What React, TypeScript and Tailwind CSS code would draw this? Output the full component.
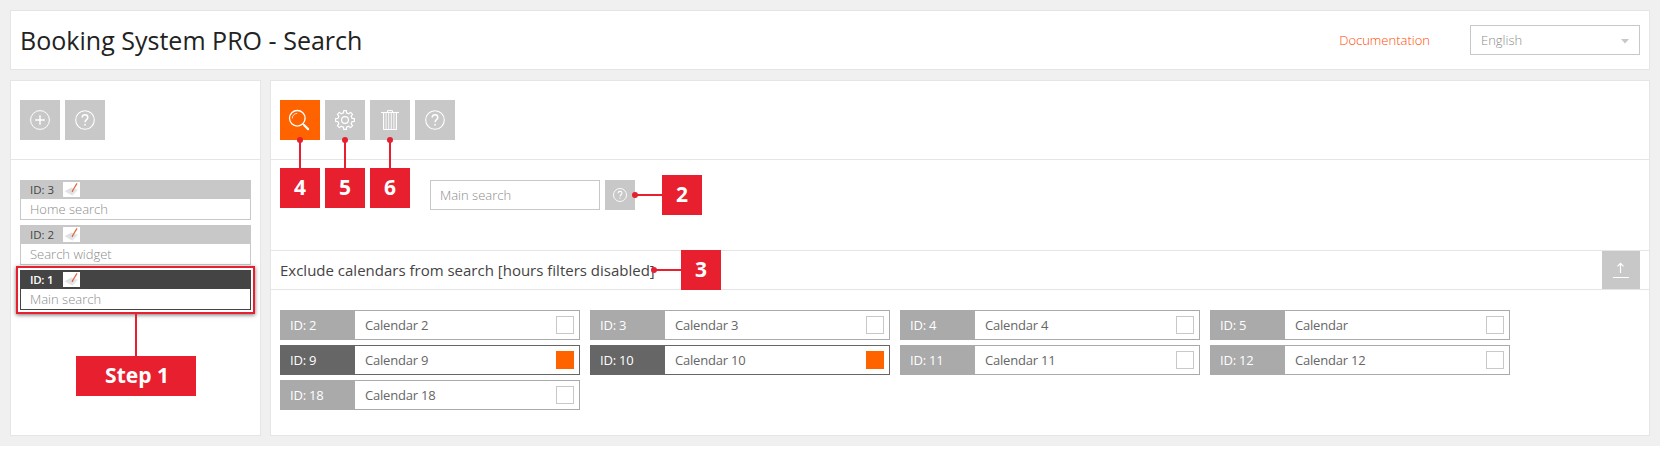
import type { ReactNode } from "react";

const PlusCircle = () => (
  <svg width="20" height="20" viewBox="0 0 20 20" fill="none" stroke="#fff" strokeWidth="1">
    <circle cx="10" cy="10" r="9.4" />
    <path d="M10 5.2v9.6M5.2 10h9.6" strokeWidth="1.4" />
  </svg>
);

const HelpCircle = ({ size }: { size: number }) => (
  <svg width={size} height={size} viewBox="0 0 20 20" fill="none" stroke="#fff" strokeWidth={size < 20 ? 1.3 : 1.1}>
    <circle cx="10" cy="10" r="9.3" />
    <path d="M7.2 7.6c0-1.7 1.1-2.8 2.8-2.8s2.8 1 2.8 2.6c0 2.2-2.7 2.3-2.7 4.8" strokeWidth="1.5" />
    <path d="M10 13.9v1.6" strokeWidth="1.6" />
  </svg>
);

const Magnifier = () => (
  <svg width="22" height="22" viewBox="0 0 22 22" fill="none" stroke="#fff" className="-ml-[2px] -mt-px">
    <circle cx="9.3" cy="9.3" r="7.8" strokeWidth="1.3" />
    <path d="M4.3 9.4c0-2.9 2.1-5 4.9-5.1" strokeWidth="0.8" />
    <path d="M14.9 14.9l1.7 1.7" strokeWidth="1.2" />
    <path d="M16.2 16.2l3.9 3.9" strokeWidth="2.2" strokeLinecap="round" />
  </svg>
);

const Gear = () => (
  <svg width="20" height="20" viewBox="0 0 20 20" fill="none" stroke="#fff" strokeWidth="1.2" strokeLinejoin="round">
    <path d="M8.4 2.9L8.7 0.6h2.6l0.3 2.3 2.2 0.9 1.8-1.4 2 2-1.4 1.8 0.9 2.2 2.3 0.3v2.6l-2.3 0.3-0.9 2.2 1.4 1.8-2 2-1.8-1.4-2.2 0.9-0.3 2.3H8.7l-0.3-2.3-2.2-0.9-1.8 1.4-2-2 1.4-1.8-0.9-2.2-2.3-0.3V8.7l2.3-0.3 0.9-2.2-1.4-1.8 2-2 1.8 1.4z" />
    <circle cx="10" cy="10" r="3.4" />
  </svg>
);

const Trash = () => (
  <svg width="18" height="20" viewBox="0 0 18 20" fill="none" stroke="#fff">
    <path d="M0 2.5h18" strokeWidth="1.1" />
    <path d="M6.5 2.3V0.6h5v1.7" strokeWidth="1" />
    <path d="M2.6 2.5v17M15.4 2.5v17M2.2 19.5h13.6" strokeWidth="1.1" />
    <path d="M5.1 3v16M7.7 3v16M10.3 3v16M12.9 3v16" strokeWidth="0.9" />
  </svg>
);

const UploadArrow = () => (
  <svg width="16" height="16" viewBox="0 0 16 16" fill="none" stroke="#fff" strokeWidth="1">
    <path d="M7.5 11V1.5M4.5 4.3l3-3 3 3" strokeWidth="1.2" />
    <path d="M0 15.5h16" />
  </svg>
);

const PencilThumb = () => (
  <svg width="17" height="15" viewBox="0 0 17 15" className="mt-px self-start bg-white">
    <path d="M1.5 9.2l7-3.7 6.5 2.3-5.6 6z" fill="#e6e6e6" />
    <path d="M3.5 9.2l5-2.5M5.5 10.4l5-3M7.5 11.6l4.6-3.4" stroke="#d2d2d2" strokeWidth="0.6" />
    <path d="M13.7 1.8L9.4 9" stroke="#ea6b45" strokeWidth="1.3" strokeLinecap="round" />
    <path d="M9.7 8.5l-0.5 1.3" stroke="#8d6b5c" strokeWidth="0.9" />
  </svg>
);

const IconButton = ({ children, active }: { children: ReactNode; active?: boolean }) => (
  <button className={`flex size-10 items-center justify-center ${active ? "bg-[#ff6300]" : "bg-[#c8c8c8]"}`}>
    {children}
  </button>
);

const Badge = ({ label }: { label: string }) => (
  <span className="flex size-10 shrink-0 items-center justify-center bg-[#e81f2f] pb-px text-[21px] font-bold text-white">
    {label}
  </span>
);

const CalloutDown = ({ label }: { label: string }) => (
  <div className="absolute left-0 top-[37px] z-10 flex w-10 flex-col items-center">
    <span className="size-1.5 rounded-full bg-[#e81f2f]" />
    <span className="-mt-[3px] h-7 w-0.5 bg-[#e81f2f]" />
    <Badge label={label} />
  </div>
);

const CalloutSide = ({ label, place }: { label: string; place: string }) => (
  <div className={`absolute z-10 flex items-center ${place}`}>
    <span className="size-1.5 rounded-full bg-[#e81f2f]" />
    <span className="-ml-[3px] h-0.5 w-[27px] bg-[#e81f2f]" />
    <Badge label={label} />
  </div>
);

const SearchItem = ({ id, name, selected }: { id: number; name: string; selected?: boolean }) => (
  <div className={`relative h-10 border ${selected ? "border-[#444444]" : "border-[#c8c8c8]"}`}>
    <div
      className={`flex h-[18px] items-center pl-[9px] text-[11.5px] leading-[18px] ${
        selected ? "bg-[#444444] font-semibold tracking-[-0.3px] text-white" : "bg-[#c8c8c8] text-[#444444]"
      }`}
    >
      <span className="w-[33px] whitespace-nowrap">ID: {id}</span>
      <PencilThumb />
    </div>
    <div className="pl-[9px] text-[13px] font-light leading-[21px] text-[#8c8c8c]">{name}</div>
    {selected && (
      <div className="absolute -left-[5px] -top-[5px] h-12 w-[239px] border-2 border-[#e81f2f] shadow-[0_1px_4px_rgba(0,0,0,0.55)]">
        <span className="absolute left-[117px] top-[46px] h-[42px] w-0.5 bg-[#e81f2f]" />
        <span className="absolute left-[58px] top-[88px] flex h-10 w-[120px] items-center justify-center bg-[#e81f2f] pl-[2px] text-[21px] font-bold text-white">
          Step 1
        </span>
      </div>
    )}
  </div>
);

const calendars = [
  { id: 2, name: "Calendar 2" },
  { id: 3, name: "Calendar 3" },
  { id: 4, name: "Calendar 4" },
  { id: 5, name: "Calendar" },
  { id: 9, name: "Calendar 9", on: true },
  { id: 10, name: "Calendar 10", on: true },
  { id: 11, name: "Calendar 11" },
  { id: 12, name: "Calendar 12" },
  { id: 18, name: "Calendar 18" },
];

const CalendarRow = ({ id, name, on }: { id: number; name: string; on?: boolean }) => (
  <div className={`flex h-[30px] items-center border pr-[5px] text-[13px] tracking-[-0.2px] ${on ? "border-[#666666]" : "border-[#aaaaaa]"}`}>
    <span className={`flex h-full w-[74px] items-center pl-[9px] pt-[2px] text-white ${on ? "bg-[#666666]" : "bg-[#aaaaaa]"}`}>
      ID: {id}
    </span>
    <span className="flex-1 pl-[10px] pt-[2px] text-[#666666]">{name}</span>
    <span className={`size-[18px] ${on ? "bg-[#ff6300]" : "border border-[#c8c8c8] bg-white"}`} />
  </div>
);

export default function App() {
  return (
    <div className="h-[462px] w-[1660px] bg-white font-['Open_Sans',sans-serif]">
      <div className="flex h-[446px] flex-col gap-[10px] bg-[#f0f0f0] p-[10px]">
        <header className="flex h-[60px] items-center border border-[#e5e5e5] bg-white px-[9px]">
          <h1 className="flex-1 pt-px text-[25px] tracking-[0.02px] text-[#222222]">Booking System PRO - Search</h1>
          <a className="mr-10 pt-[2px] text-[13px] font-light text-[#ff4a00]">Documentation</a>
          <div className="flex h-[30px] w-[170px] items-center justify-between border border-[#c8c8c8] px-[10px] text-[13px] font-light text-[#8c8c8c]">
            <span className="pt-[2px]">English</span>
            <svg width="8" height="5" viewBox="0 0 8 5" className="mt-0.5">
              <path d="M0 0h8L4 4.6z" fill="#c8c8c8" />
            </svg>
          </div>
        </header>

        <main className="flex h-[356px] gap-[9px]">
          <aside className="w-[251px] border border-[#e5e5e5] bg-white">
            <div className="flex h-[79px] gap-[5px] border-b border-[#e5e5e5] pl-[9px] pt-[19px]">
              <IconButton><PlusCircle /></IconButton>
              <IconButton><HelpCircle size={20} /></IconButton>
            </div>
            <div className="flex flex-col gap-[5px] px-[9px] pt-5">
              <SearchItem id={3} name="Home search" />
              <SearchItem id={2} name="Search widget" />
              <SearchItem id={1} name="Main search" selected />
            </div>
          </aside>

          <section className="w-[1380px] border border-[#e5e5e5] bg-white">
            <div className="flex h-[79px] gap-[5px] border-b border-[#e5e5e5] pl-[9px] pt-[19px]">
              <div className="relative">
                <IconButton active><Magnifier /></IconButton>
                <CalloutDown label="4" />
              </div>
              <div className="relative">
                <IconButton><Gear /></IconButton>
                <CalloutDown label="5" />
              </div>
              <div className="relative">
                <IconButton><Trash /></IconButton>
                <CalloutDown label="6" />
              </div>
              <IconButton><HelpCircle size={20} /></IconButton>
            </div>

            <div className="flex h-[90px] gap-[5px] pl-[159px] pt-5">
              <div className="flex h-[30px] w-[170px] items-center border border-[#c8c8c8] pl-[9px] pt-[2px] text-[13px] font-light text-[#8c8c8c]">
                Main search
              </div>
              <div className="relative flex size-[30px] items-center justify-center bg-[#c8c8c8]">
                <HelpCircle size={14} />
                <CalloutSide label="2" place="left-[27px] -top-[5px]" />
              </div>
            </div>

            <div className="flex h-10 items-center justify-between border-y border-[#e5e5e5] px-[9px]">
              <h2 className="relative text-[15px] text-[#444444]">
                Exclude calendars from search [hours filters disabled]
                <CalloutSide label="3" place="left-[371px] -top-[9px]" />
              </h2>
              <button className="flex size-[38px] items-center justify-center bg-[#c8c8c8]"><UploadArrow /></button>
            </div>

            <div className="grid grid-cols-[repeat(4,300px)] gap-x-[10px] gap-y-[5px] pl-[9px] pt-5">
              {calendars.map((c) => (
                <CalendarRow key={c.id} {...c} />
              ))}
            </div>
          </section>
        </main>
      </div>
    </div>
  );
}
